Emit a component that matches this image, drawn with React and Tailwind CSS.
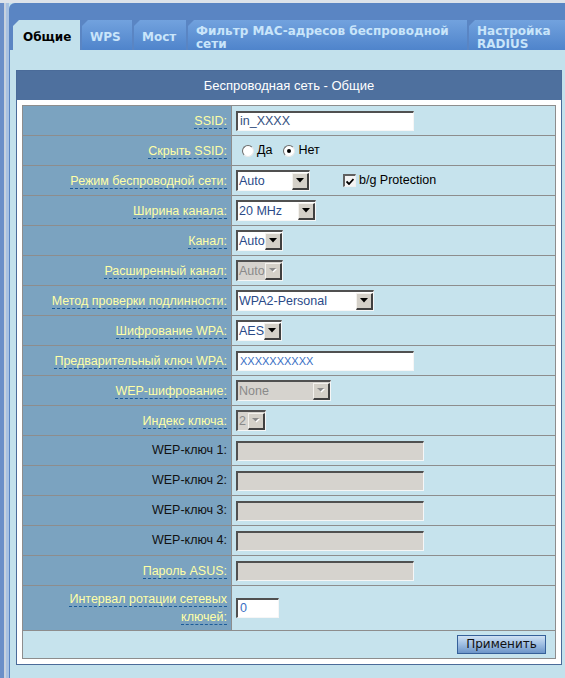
import React from 'react';

const SANS = "font-['Liberation_Sans',Arial,sans-serif]";
const VERD = "font-['DejaVu_Sans',Verdana,sans-serif]";

function Arrow({ disabled }) {
  return (
    <div className="w-[17px] h-[17px] shrink-0 flex items-center justify-center bg-[#d4d0c8] border-t border-l border-b-2 border-r-2 border-t-[#f4f2ee] border-l-[#f4f2ee] border-b-[#404040] border-r-[#404040]">
      <svg width="8" height="5" viewBox="0 0 8 5">
        {disabled ? (
          <>
            <path d="M1 1 H8 L4.5 4.5 Z" fill="#ffffff" />
            <path d="M0 0 H7 L3.5 3.5 Z" fill="#8a8a8a" />
          </>
        ) : (
          <path d="M0 0 H8 L4 4.5 Z" fill="#000000" />
        )}
      </svg>
    </div>
  );
}

function Select({ w, value, disabled }) {
  return (
    <div
      className={`${w} h-[21px] flex items-center border-t-2 border-l-2 border-b border-r border-t-[#505050] border-l-[#505050] border-b-[#f6f6f6] border-r-[#f6f6f6] ${
        disabled ? 'bg-[#d6d3ce] text-[#8a8a8a]' : 'bg-white text-[#2a4a88]'
      } ${SANS} text-[12.5px]`}
    >
      <span className="flex-1 min-w-0 pl-[1px] leading-[17px] whitespace-nowrap">{value}</span>
      <Arrow disabled={disabled} />
    </div>
  );
}

function Input({ w, value, disabled, text = 'text-[12.5px] text-[#34507f]' }) {
  return (
    <div
      className={`${w} h-[20px] flex items-center border-t-2 border-l-2 border-b border-r border-t-[#505050] border-l-[#505050] border-b-[#f6f6f6] border-r-[#f6f6f6] ${
        disabled ? 'bg-[#d6d3ce]' : 'bg-white'
      } ${SANS} ${text} pl-[2px] leading-[17px] whitespace-nowrap`}
    >
      {value}
    </div>
  );
}

function Radio({ checked }) {
  return (
    <span className="w-[12px] h-[12px] rounded-full bg-white border border-t-[#6a6a6a] border-l-[#6a6a6a] border-b-[#e8e8e8] border-r-[#e8e8e8] flex items-center justify-center">
      {checked && <span className="w-[4px] h-[4px] rounded-full bg-black" />}
    </span>
  );
}

function Row({ label, plain, tall, children }) {
  return (
    <div className={`flex border-b border-[#8d8d8d] ${tall ? 'h-[45px]' : 'h-[30px]'}`}>
      <div className="w-[209px] shrink-0 border-r border-[#8d8d8d] bg-[#7ba3c0] flex items-center justify-end pr-[4px] text-right">
        {plain ? (
          <span className={`${SANS} text-[12.5px] text-[#111]`}>{label}</span>
        ) : (
          <span className={`${SANS} text-[12.5px] leading-[18px] text-[#ffffa6]`}>
            {label.map((l, i) => (
              <React.Fragment key={i}>
                {i > 0 && <br />}
                <span className="border-b border-dashed border-[#1b5c99]">{l}</span>
              </React.Fragment>
            ))}
          </span>
        )}
      </div>
      <div className="flex-1 bg-[#c6e3ed] flex items-center pl-[4px]">{children}</div>
    </div>
  );
}

const TAB_CUT = '[clip-path:polygon(6px_0,100%_0,100%_100%,0_100%,0_6px)]';

function Tab({ w, active, children }) {
  return (
    <div
      className={`${w} h-[30px] shrink-0 flex items-center pt-[5px] ${TAB_CUT} ${VERD} font-bold text-[12px] leading-[13px] ${
        active
          ? 'bg-[#c3e1ec] text-black pl-[10px]'
          : 'bg-gradient-to-b from-[#72a2de] to-[#4f84cb] text-[#c9e5fa] pl-[8px]'
      }`}
    >
      <div>{children}</div>
    </div>
  );
}

export default function App() {
  return (
    <div className="w-[565px] h-[678px] overflow-hidden bg-[#c3e1ec] flex flex-col">
      {/* top light line */}
      <div className="h-[3px] bg-[#dde3ea]" />
      <div className="flex-1 flex">
        {/* left edge */}
        <div className="w-[4px] bg-[#6b8fc8]" />
        <div className="w-[2px] bg-[#c8d2de]" />
        <div className="w-[3px] bg-[#a9c2e2]" />

        <div className="flex-1 flex flex-col bg-[#c3e1ec]">
          {/* tabs */}
          <div className="flex gap-[2px] pt-[17px] pl-[4px] bg-[#5a85c3] rounded-tl-[6px]">
            <Tab w="w-[67px]" active>Общие</Tab>
            <Tab w="w-[50px]">WPS</Tab>
            <Tab w="w-[52px]">Мост</Tab>
            <Tab w="w-[279px]">
              Фильтр MAC-адресов беспроводной
              <br />
              сети
            </Tab>
            <Tab w="flex-1">
              Настройка
              <br />
              RADIUS
            </Tab>
          </div>

          {/* content */}
          <div className="flex-1 border-l border-[#5a85c3] pt-[20px] pl-[6px]">
            <div className="w-[546px] border border-[#4a6b99] bg-white">
              <div className={`h-[29px] bg-[#4e709e] flex items-center justify-center text-white text-[13px] ${SANS}`}>
                Беспроводная сеть - Общие
              </div>
              <div className="px-[5px] pt-[5px] pb-[5px]">
                <div className="border-t border-l border-r border-[#8d8d8d]">
                  <Row label={['SSID:']}>
                    <Input w="w-[178px]" value="in_XXXX" />
                  </Row>
                  <Row label={['Скрыть SSID:']}>
                    <div className={`flex items-center ${SANS} text-[12.5px] text-black pl-[6px]`}>
                      <Radio />
                      <span className="ml-[3px]">Да</span>
                      <span className="ml-[11px]">
                        <Radio checked />
                      </span>
                      <span className="ml-[3px]">Нет</span>
                    </div>
                  </Row>
                  <Row label={['Режим беспроводной сети:']}>
                    <Select w="w-[74px]" value="Auto" />
                    <span className="ml-[33px] w-[13px] h-[13px] bg-[#f4f4f4] border-t-2 border-l-2 border-b border-r border-t-[#606060] border-l-[#606060] border-b-[#f0f0f0] border-r-[#f0f0f0] flex items-center justify-center">
                      <svg width="8" height="7" viewBox="0 0 8 7">
                        <path d="M0.5 3.5 L3 6 L7.5 1" stroke="#000" strokeWidth="1.8" fill="none" />
                      </svg>
                    </span>
                    <span className={`ml-[3px] ${SANS} text-[12.5px] text-black`}>b/g Protection</span>
                  </Row>
                  <Row label={['Ширина канала:']}>
                    <Select w="w-[80px]" value="20 MHz" />
                  </Row>
                  <Row label={['Канал:']}>
                    <Select w="w-[47px]" value="Auto" />
                  </Row>
                  <Row label={['Расширенный канал:']}>
                    <Select w="w-[47px]" value="Auto" disabled />
                  </Row>
                  <Row label={['Метод проверки подлинности:']}>
                    <Select w="w-[138px]" value="WPA2-Personal" />
                  </Row>
                  <Row label={['Шифрование WPA:']}>
                    <Select w="w-[46px]" value="AES" />
                  </Row>
                  <Row label={['Предварительный ключ WPA:']}>
                    <Input w="w-[178px]" value="XXXXXXXXXX" text="text-[11px] text-[#3a6fc4]" />
                  </Row>
                  <Row label={['WEP-шифрование:']}>
                    <Select w="w-[95px]" value="None" disabled />
                  </Row>
                  <Row label={['Индекс ключа:']}>
                    <Select w="w-[30px]" value="2" disabled />
                  </Row>
                  <Row label="WEP-ключ 1:" plain>
                    <Input w="w-[188px]" disabled />
                  </Row>
                  <Row label="WEP-ключ 2:" plain>
                    <Input w="w-[188px]" disabled />
                  </Row>
                  <Row label="WEP-ключ 3:" plain>
                    <Input w="w-[188px]" disabled />
                  </Row>
                  <Row label="WEP-ключ 4:" plain>
                    <Input w="w-[188px]" disabled />
                  </Row>
                  <Row label={['Пароль ASUS:']}>
                    <Input w="w-[178px]" disabled />
                  </Row>
                  <Row label={['Интервал ротации сетевых', 'ключей:']} tall>
                    <Input w="w-[43px]" value="0" text="text-[12.5px] text-[#3a6fc4]" />
                  </Row>
                  <div className="h-[28px] border-b border-[#8d8d8d] bg-[#c6e3ed] flex items-center justify-end pr-[9px]">
                    <button
                      className={`w-[89px] h-[19px] border border-[#35609a] bg-gradient-to-b from-[#cfe1f3] via-[#9dbde2] to-[#6d95c8] ${VERD} text-[12px] text-[#111] leading-[15px]`}
                    >
                      Применить
                    </button>
                  </div>
                </div>
              </div>
            </div>
          </div>
        </div>
      </div>
    </div>
  );
}
